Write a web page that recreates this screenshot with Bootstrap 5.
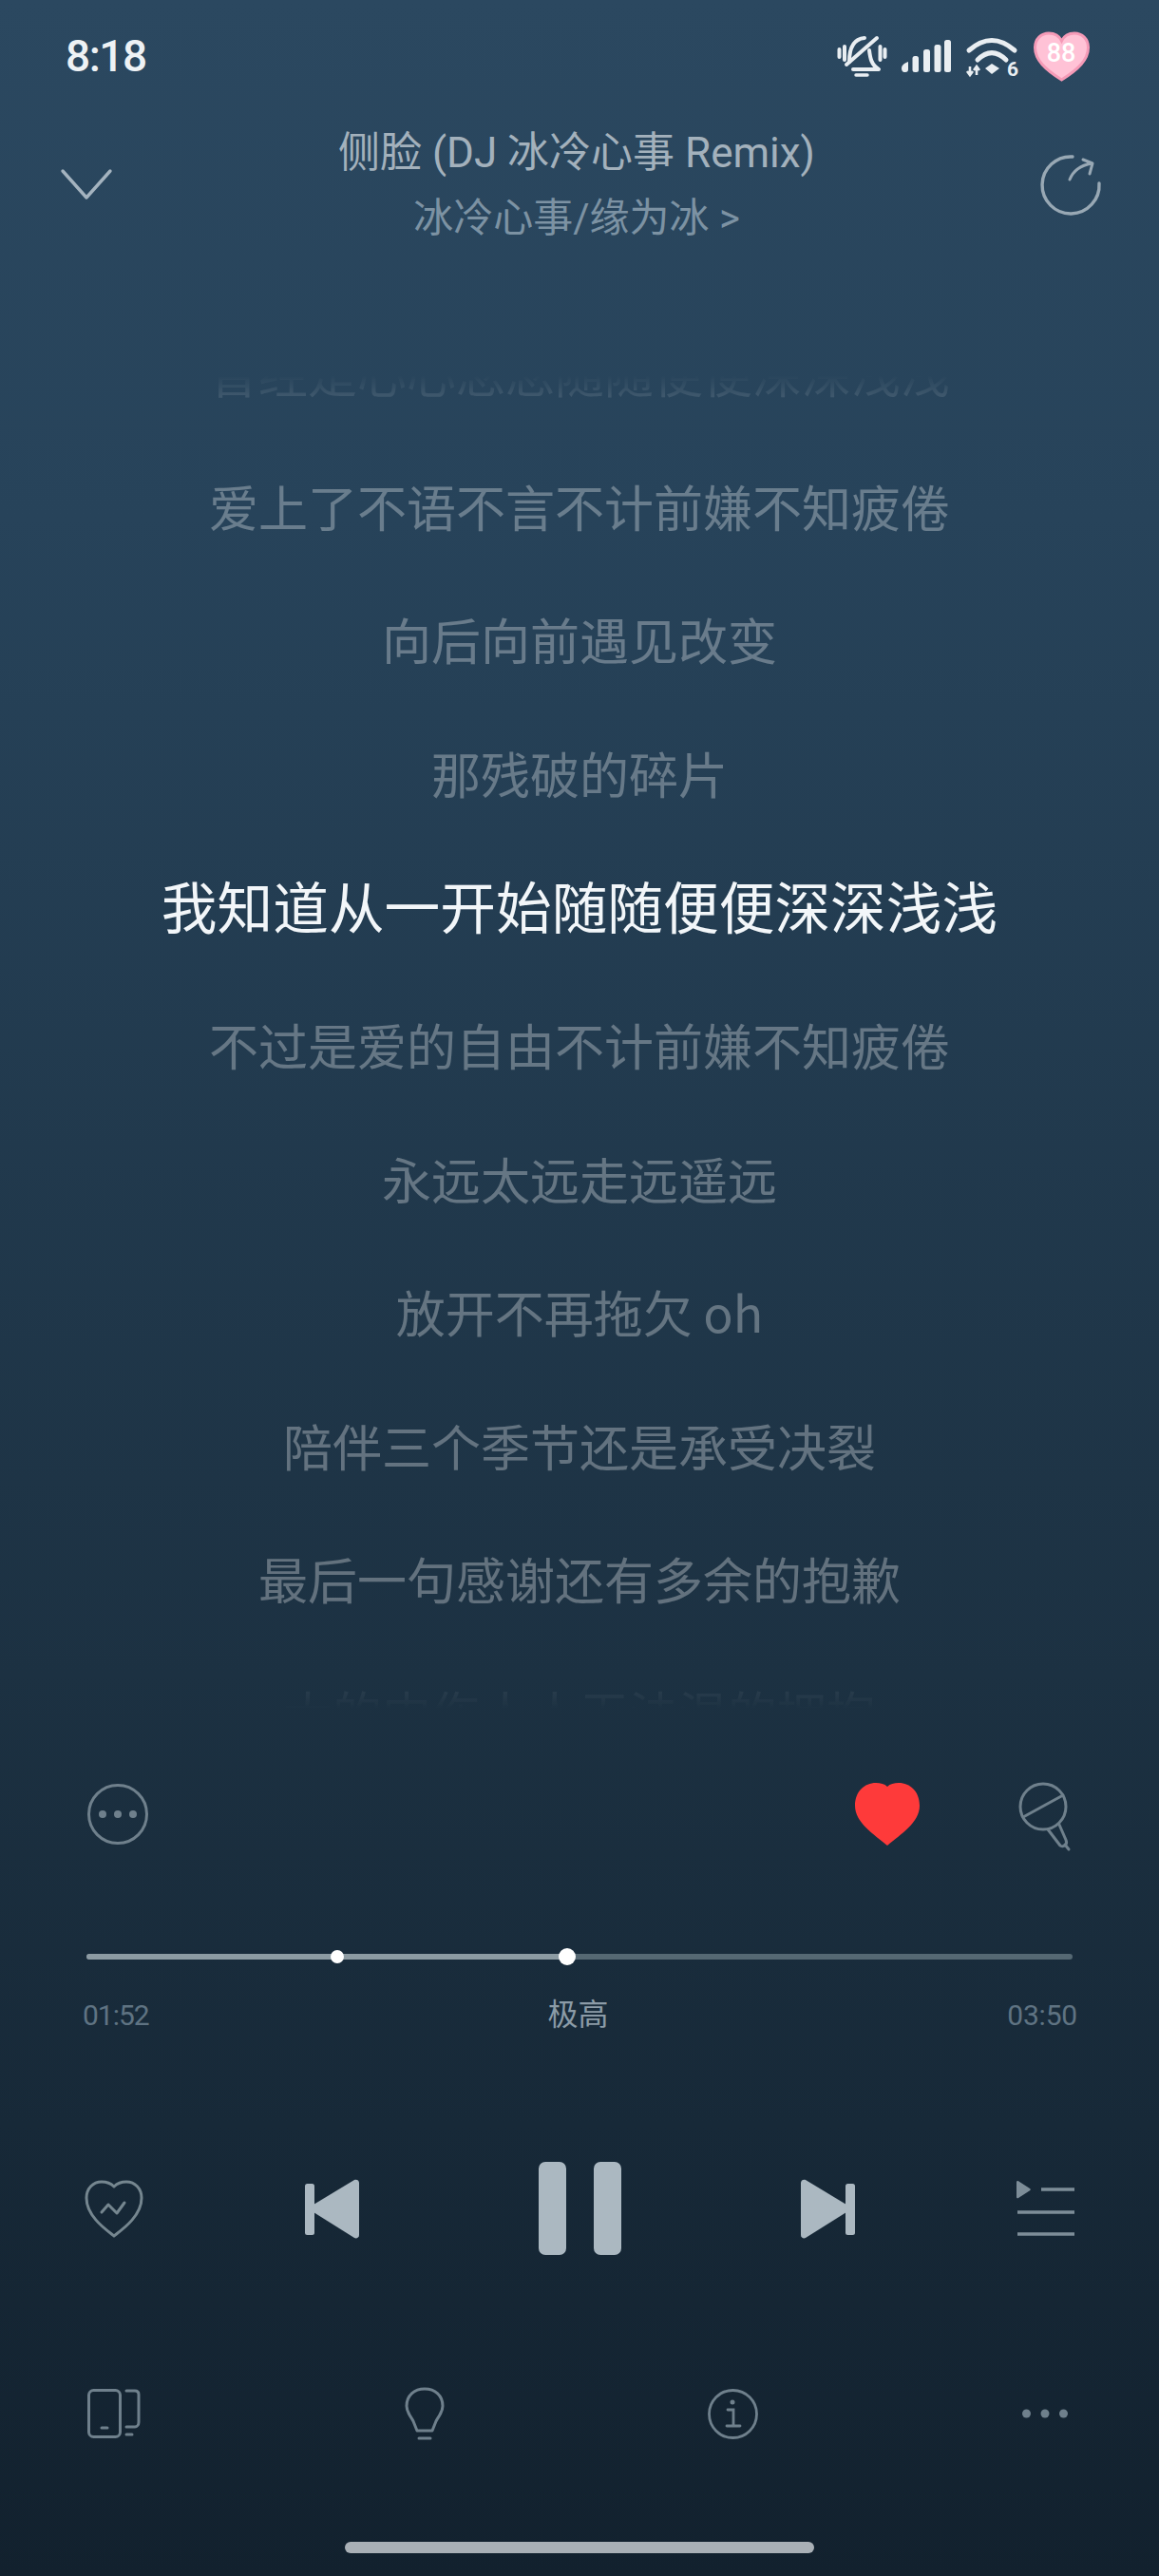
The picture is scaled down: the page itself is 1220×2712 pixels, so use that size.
<!DOCTYPE html>
<html lang="zh">

<head>
  <meta charset="UTF-8">
  <title>侧脸</title>
  <link href="https://cdn.jsdelivr.net/npm/bootstrap@5.3.3/dist/css/bootstrap.min.css" rel="stylesheet">
  <style>
    body {
      width: 1220px;
      height: 2712px;
      overflow: hidden;
      color: #fff;
      font-family: Roboto, "Noto Sans CJK SC", sans-serif;
      background: linear-gradient(180deg, #2b4860 0%, #27435a 20%, #1c3142 65%, #12212e 100%);
    }

    svg {
      display: block;
      flex: none;
      overflow: visible;
    }

    .status-row {
      height: 118px;
      padding: 0 73px 0 69px;
    }

    .clock {
      font-size: 46px;
      font-weight: 500;
      color: #eef2f5;
      letter-spacing: -1.500px;
    }

    .status-icons {
      gap: 16px;
    }

    .top-row {
      height: 152px;
      padding: 0 62px 0 64px;
    }

    .song-title {
      font-size: 44px;
      line-height: 68px;
      padding-top: 3px;
      color: #a3b1bc;
      font-weight: 400;
    }

    .song-artist {
      font-size: 42px;
      line-height: 70px;
      color: #7c92a3;
      font-weight: 400;
    }

    .lyric-view {
      height: 1414px;
      margin-top: 125px;
      overflow: hidden;
      -webkit-mask-image: linear-gradient(180deg, transparent 0, #000 65px, #000 1295px, transparent 1405px);
      mask-image: linear-gradient(180deg, transparent 0, #000 65px, #000 1295px, transparent 1405px);
    }

    .lyric-line {
      flex: none;
      height: 140.5px;
      padding-bottom: 9px;
      font-size: 52px;
      font-weight: 400;
      color: rgba(255, 255, 255, .31);
      font-family: "Noto Sans CJK SC", sans-serif;
    }

    .lyric-line.now {
      height: 146px;
      padding-bottom: 16px;
      font-size: 58.7px;
      font-weight: 400;
      color: #f2f6f9;
    }

    .action-row {
      height: 202px;
      padding: 0 92px;
    }

    .action-right {
      gap: 104px;
    }

    .mic-icon {
      margin-top: 6px;
    }

    .track-wrap {
      height: 98px;
      padding: 46px 91px 0;
    }

    .track {
      height: 6px;
      border-radius: 3px;
      background: #556873;
      overflow: visible;
    }

    .track .progress-bar {
      background: #8c9ba3;
      border-radius: 3px;
    }

    .knob {
      top: 50%;
      width: 14px;
      height: 14px;
      border-radius: 50%;
      background: #fff;
      transform: translate(-50%, -50%);
    }

    .knob-big {
      width: 18px;
      height: 18px;
    }

    .time-row {
      height: 24px;
      padding: 0 86px 0 87px;
      font-size: 30px;
      letter-spacing: -1px;
      color: #5f7382;
    }

    .time-end {
      letter-spacing: -.2px;
    }

    .quality {
      font-size: 32px;
      letter-spacing: 0;
      color: #8b9ba7;
    }

    .ctrl-row {
      height: 300px;
      margin-top: 42px;
      padding: 0 89px;
    }

    .ctrl-mid {
      gap: 189px;
    }

    .pause-btn {
      gap: 29px;
    }

    .pause-btn span {
      width: 29px;
      height: 98px;
      border-radius: 7px;
      background: #abb8c1;
    }

    .bottom-row {
      height: 132px;
      padding: 0 96px 0 92px;
    }

    .home-bar {
      width: 494px;
      height: 12px;
      margin: 69px auto 0;
      border-radius: 6px;
      background: #a9b0b6;
    }
  </style>
</head>

<body>

  <!-- status bar -->
  <div class="status-row d-flex justify-content-between align-items-center">
    <div class="clock">8:18</div>
    <div class="status-icons d-flex align-items-center">
      <svg width="51" height="43" viewBox="0 0 51 43" fill="none" stroke="#e9eef2" stroke-width="4" stroke-linecap="round" stroke-linejoin="round">
        <path d="M1.500 14v8M7 11v14M44.500 11v14M49.500 14v8" />
        <path d="M12 27C12 14 16 3 28 2M33 15c1 8 2 15 10 20H16" />
        <path d="M41 2 9 30" />
        <path d="M19 41h12" stroke-width="3.500" />
      </svg>
      <svg width="52" height="34" viewBox="0 0 52 34" fill="#e9eef2">
        <path d="M0 30c0-3 2-5 7-7v8c0 2-1 3-3 3H3c-2 0-3-2-3-4z" />
        <rect x="11.500" y="17" width="6.500" height="17" rx="2.500" />
        <rect x="23" y="10" width="7" height="24" rx="2.500" />
        <rect x="34.500" y="5" width="7" height="29" rx="2.500" />
        <rect x="45" y="0" width="7" height="34" rx="2.500" />
      </svg>
      <svg width="55" height="41" viewBox="0 0 55 41" fill="none" stroke="#e9eef2" stroke-width="5" stroke-linecap="round">
        <path d="M3 14Q27-7 51 14" />
        <path d="M12 24Q27 9 42 24" />
        <path d="M20 33l7-5 8 5-8 6z" fill="#e9eef2" stroke="none" />
        <path d="M4 31v9M1 36l3 4 3-4M11 40v-9M8 35l3-4 3 4" stroke-width="2.600" stroke-linecap="butt" />
        <text x="43" y="41" font-family="Roboto" font-size="21" font-weight="700" fill="#e9eef2" stroke="none">6</text>
      </svg>
      <svg width="59" height="52" viewBox="0 0 59 52">
        <path d="M29.500 51C12 40 1.500 30 1.500 17 1.500 8 8 2 16 2c6 0 11 3 13.500 8C32 5 37 2 43 2c8 0 14.500 6 14.500 15 0 13-10.500 23-28 34z" fill="#ffc2d6" stroke="#f59ab7" stroke-width="3" />
        <text x="29" y="32" text-anchor="middle" font-family="Roboto" font-size="27" font-weight="500" fill="#fff">88</text>
      </svg>
    </div>
  </div>

  <!-- song header -->
  <div class="top-row d-flex justify-content-between align-items-center">
    <svg width="54" height="32" viewBox="0 0 54 32" fill="none" stroke="#a4b3bf" stroke-width="3.400" stroke-linecap="round" stroke-linejoin="round">
      <path d="M2 2 27 30 52 2" />
    </svg>
    <div class="text-center">
      <div class="song-title">侧脸 (DJ 冰冷心事 Remix)</div>
      <div class="song-artist">冰冷心事/缘为冰 &gt;</div>
    </div>
    <svg width="62" height="63" viewBox="0 0 62 63" fill="none" stroke="#98a8b4" stroke-width="3.400" stroke-linecap="round" stroke-linejoin="round">
      <path d="M33 2A30 30 0 1 0 61 30" />
      <path d="M30 26C34 16 42 11 53 9M44 5l10 4-3 11" stroke-width="3" />
    </svg>
  </div>

  <!-- lyrics -->
  <div class="lyric-view d-flex flex-column justify-content-center align-items-stretch text-center">
    <div class="lyric-line d-flex align-items-center justify-content-center">曾经是心心念念随随便便深深浅浅</div>
    <div class="lyric-line d-flex align-items-center justify-content-center">爱上了不语不言不计前嫌不知疲倦</div>
    <div class="lyric-line d-flex align-items-center justify-content-center">向后向前遇见改变</div>
    <div class="lyric-line d-flex align-items-center justify-content-center">那残破的碎片</div>
    <div class="lyric-line now d-flex align-items-center justify-content-center">我知道从一开始随随便便深深浅浅</div>
    <div class="lyric-line d-flex align-items-center justify-content-center">不过是爱的自由不计前嫌不知疲倦</div>
    <div class="lyric-line d-flex align-items-center justify-content-center">永远太远走远遥远</div>
    <div class="lyric-line d-flex align-items-center justify-content-center">放开不再拖欠 oh</div>
    <div class="lyric-line d-flex align-items-center justify-content-center">陪伴三个季节还是承受决裂</div>
    <div class="lyric-line d-flex align-items-center justify-content-center">最后一句感谢还有多余的抱歉</div>
    <div class="lyric-line d-flex align-items-center justify-content-center">大的内伤人人无法温的拥抱</div>
  </div>

  <!-- more / like / karaoke -->
  <div class="action-row d-flex justify-content-between align-items-center">
    <svg width="64" height="64" viewBox="0 0 64 64" fill="#6f808c" stroke="none">
      <circle cx="32" cy="32" r="30.500" fill="none" stroke="#6f808c" stroke-width="3" />
      <circle cx="16" cy="32" r="4" />
      <circle cx="32" cy="32" r="4" />
      <circle cx="48" cy="32" r="4" />
    </svg>
    <div class="action-right d-flex align-items-center">
      <svg width="68" height="66" viewBox="0 0 68 66">
        <path d="M34 66C20 54 0 42 0 24 0 9 10 0 22 0c5 0 9 1 12 4 3-3 7-4 12-4 12 0 22 9 22 24 0 18-20 30-34 42z" fill="#fe3a3a" />
      </svg>
      <svg class="mic-icon" width="56" height="72" viewBox="0 0 56 72" fill="none" stroke="#6f808c" stroke-width="3" stroke-linecap="round" stroke-linejoin="round">
        <circle cx="26" cy="25" r="24" />
        <path d="M5 36 47 13" />
        <path d="M31 49 44 66c4 2 8-1 6-6L43 44" />
        <path d="M49 65l4 5" />
      </svg>
    </div>
  </div>

  <!-- progress -->
  <div class="track-wrap">
    <div class="progress track position-relative">
      <div class="progress-bar" style="width: 48.7%"></div>
      <span class="knob position-absolute" style="left: 25.4%"></span>
      <span class="knob knob-big position-absolute" style="left: 48.7%"></span>
    </div>
  </div>
  <div class="time-row d-flex justify-content-between align-items-center">
    <span>01:52</span>
    <span class="quality">极高</span>
    <span class="time-end">03:50</span>
  </div>

  <!-- player controls -->
  <div class="ctrl-row d-flex justify-content-between align-items-center">
    <svg width="62" height="61" viewBox="0 0 62 61" fill="none" stroke="#75868f" stroke-width="3" stroke-linecap="round" stroke-linejoin="round">
      <path d="M31 59C22 52 2 38 2 19 2 9 9 2 18 2c6 0 10 2 13 5 3-3 7-5 13-5 9 0 16 7 16 17 0 19-20 33-29 40z" />
      <path d="M18 34l7-8 9 9 8-11" />
    </svg>
    <div class="ctrl-mid d-flex align-items-center">
      <svg width="57" height="63" viewBox="0 0 57 63" fill="#abb8c1">
        <rect x="0" y="5" width="10" height="54" rx="2.500" />
        <path d="M9 27 52 1c2-1 5 0 5 3v55c0 3-3 4-5 3L9 35z" />
      </svg>
      <div class="pause-btn d-flex">
        <span></span>
        <span></span>
      </div>
      <svg width="57" height="63" viewBox="0 0 57 63" fill="#abb8c1">
        <rect x="47" y="5" width="10" height="54" rx="2.500" />
        <path d="M48 27 5 1C3 0 0 1 0 4v55c0 3 3 4 5 3l43-27z" />
      </svg>
    </div>
    <svg width="61" height="59" viewBox="0 0 61 59" fill="none" stroke="#7d8d98" stroke-width="3.400">
      <path d="M0 1.500c0-1.500 1-2 2-1.300L14 8c1 .7 1 1.500 0 2.200L2 18c-1 .7-2 0-2-1.300z" fill="#7d8d98" stroke="none" />
      <path d="M26 9h35M1 33h60M1 56h60" />
    </svg>
  </div>

  <!-- bottom tools -->
  <div class="bottom-row d-flex justify-content-between align-items-center">
    <svg width="56" height="52" viewBox="0 0 56 52" fill="none" stroke="#6f808c" stroke-width="3" stroke-linecap="round" stroke-linejoin="round">
      <rect x="1.500" y="1.500" width="33" height="49" rx="5" />
      <path d="M15 41h6M41 2h9c3 0 4 2 4 4v29c0 3-2 5-4 5h-9M41 48h6" />
    </svg>
    <svg width="42" height="56" viewBox="0 0 42 56" fill="none" stroke="#6f808c" stroke-width="3" stroke-linecap="round" stroke-linejoin="round">
      <path d="M13 46h16l4-10c3-6 7-9 7-16C40 9 32 2 21 2S2 9 2 20c0 7 4 10 7 16z" />
      <path d="M15 54h12" />
    </svg>
    <svg width="53" height="53" viewBox="0 0 53 53" fill="none" stroke="#6f808c" stroke-width="2.800" stroke-linecap="round">
      <circle cx="26.500" cy="26.500" r="25" />
      <circle cx="26" cy="14" r="2.500" fill="#6f808c" stroke="none" />
      <path d="M21 22h6v17M20 39h14" />
    </svg>
    <svg width="48" height="10" viewBox="0 0 48 10" fill="#6f808c">
      <circle cx="4.500" cy="5" r="4.500" />
      <circle cx="24" cy="5" r="4.500" />
      <circle cx="43.500" cy="5" r="4.500" />
    </svg>
  </div>

  <div class="home-bar"></div>

  <script src="https://cdn.jsdelivr.net/npm/bootstrap@5.3.3/dist/js/bootstrap.bundle.min.js"></script>
</body>

</html>
